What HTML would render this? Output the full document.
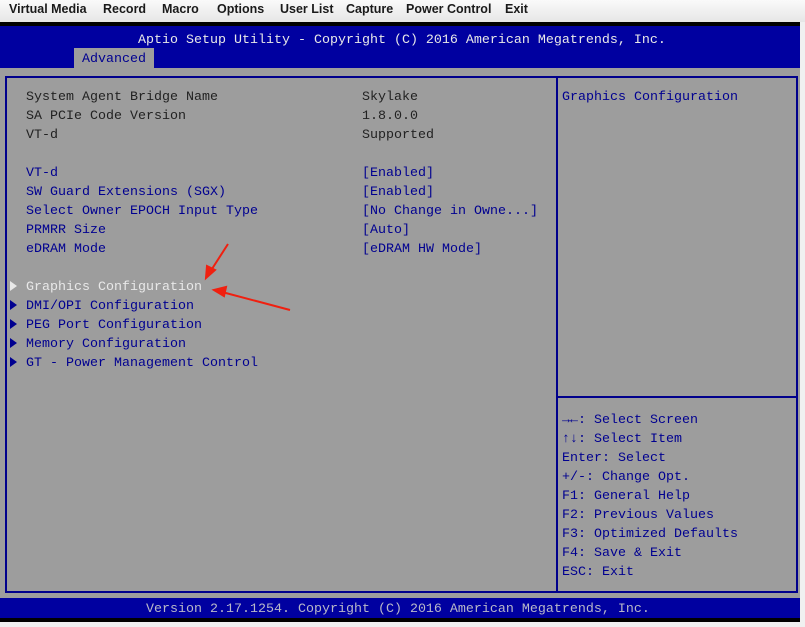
<!DOCTYPE html><html><head><style>
body{margin:0;width:805px;height:627px;background:#f0f0f0;position:relative;overflow:hidden;font-family:"Liberation Mono",monospace;}
.menu{position:absolute;left:0;top:0;width:805px;height:22px;background:linear-gradient(#fafafa,#e6e6e6);font:bold 12.5px "Liberation Sans",sans-serif;color:#1a1a1a;}
.menu span{position:absolute;top:2px}
.blk{position:absolute;left:0;top:22px;width:800px;height:4px;background:#000}
.hdr{position:absolute;left:0;top:26px;width:800px;height:42px;background:#0000a0}
.body{position:absolute;left:0;top:68px;width:800px;height:530px;background:#9d9d9d}
.ftr{position:absolute;left:0;top:598px;width:800px;height:20px;background:#0000a0}
.blk2{position:absolute;left:0;top:618px;width:800px;height:4px;background:#000}
.t{position:absolute;font-size:13.33px;line-height:19px;white-space:pre}
.w{color:#e8e8e8}.d{color:#222}.b{color:#000090}
.box{position:absolute;border:2px solid #00008c}
.tri{position:absolute;left:10px;width:0;height:0;border-top:5px solid transparent;border-bottom:5px solid transparent;border-left:7px solid #000090}
</style></head><body>
<div class="menu"><span style="left:9px">Virtual Media</span><span style="left:103px">Record</span><span style="left:162px">Macro</span><span style="left:217px">Options</span><span style="left:280px">User List</span><span style="left:346px">Capture</span><span style="left:406px">Power Control</span><span style="left:505px">Exit</span></div>
<div class="blk"></div><div class="hdr"></div>
<div style="position:absolute;left:74px;top:48px;width:80px;height:20px;background:#9d9d9d"></div>
<div class="t w" style="left:138px;top:31px">Aptio Setup Utility - Copyright (C) 2016 American Megatrends, Inc.</div>
<div class="t b" style="left:82px;top:50px">Advanced</div>
<div class="body"></div>
<div class="box" style="left:5px;top:76px;width:789px;height:513px"></div>
<div style="position:absolute;left:556px;top:76px;width:2px;height:515px;background:#00008c"></div>
<div style="position:absolute;left:556px;top:396px;width:240px;height:2px;background:#00008c"></div>
<div class="t d" style="left:26px;top:88px">System Agent Bridge Name
SA PCIe Code Version
VT-d</div>
<div class="t d" style="left:362px;top:88px">Skylake
1.8.0.0
Supported</div>
<div class="t b" style="left:26px;top:164px">VT-d
SW Guard Extensions (SGX)
Select Owner EPOCH Input Type
PRMRR Size
eDRAM Mode</div>
<div class="t b" style="left:362px;top:164px">[Enabled]
[Enabled]
[No Change in Owne...]
[Auto]
[eDRAM HW Mode]</div>
<div class="tri" style="top:281px;border-left-color:#e8e8e8"></div>
<div class="tri" style="top:300px"></div>
<div class="tri" style="top:319px"></div>
<div class="tri" style="top:338px"></div>
<div class="tri" style="top:357px"></div>
<div class="t w" style="left:26px;top:278px">Graphics Configuration</div>
<div class="t b" style="left:26px;top:297px">DMI/OPI Configuration
PEG Port Configuration
Memory Configuration
GT - Power Management Control</div>
<div class="t b" style="left:562px;top:88px">Graphics Configuration</div>
<div class="t b" style="left:562px;top:411px"><b>→←</b>: Select Screen
<b>↑↓</b>: Select Item
Enter: Select
+/-: Change Opt.
F1: General Help
F2: Previous Values
F3: Optimized Defaults
F4: Save &amp; Exit
ESC: Exit</div>
<div class="ftr"></div><div class="blk2"></div>
<div class="t" style="left:146px;top:600px;color:#b8b8c8">Version 2.17.1254. Copyright (C) 2016 American Megatrends, Inc.</div>
<svg style="position:absolute;left:0;top:0" width="805" height="627">
<g stroke="#f02010" stroke-width="2" fill="#f02010">
<line x1="228" y1="244" x2="210" y2="272"/><polygon points="206,278 207,266 215,270"/>
<line x1="290" y1="310" x2="222" y2="292"/><polygon points="214,290 226,287 224,296"/>
</g></svg>
</body></html>
